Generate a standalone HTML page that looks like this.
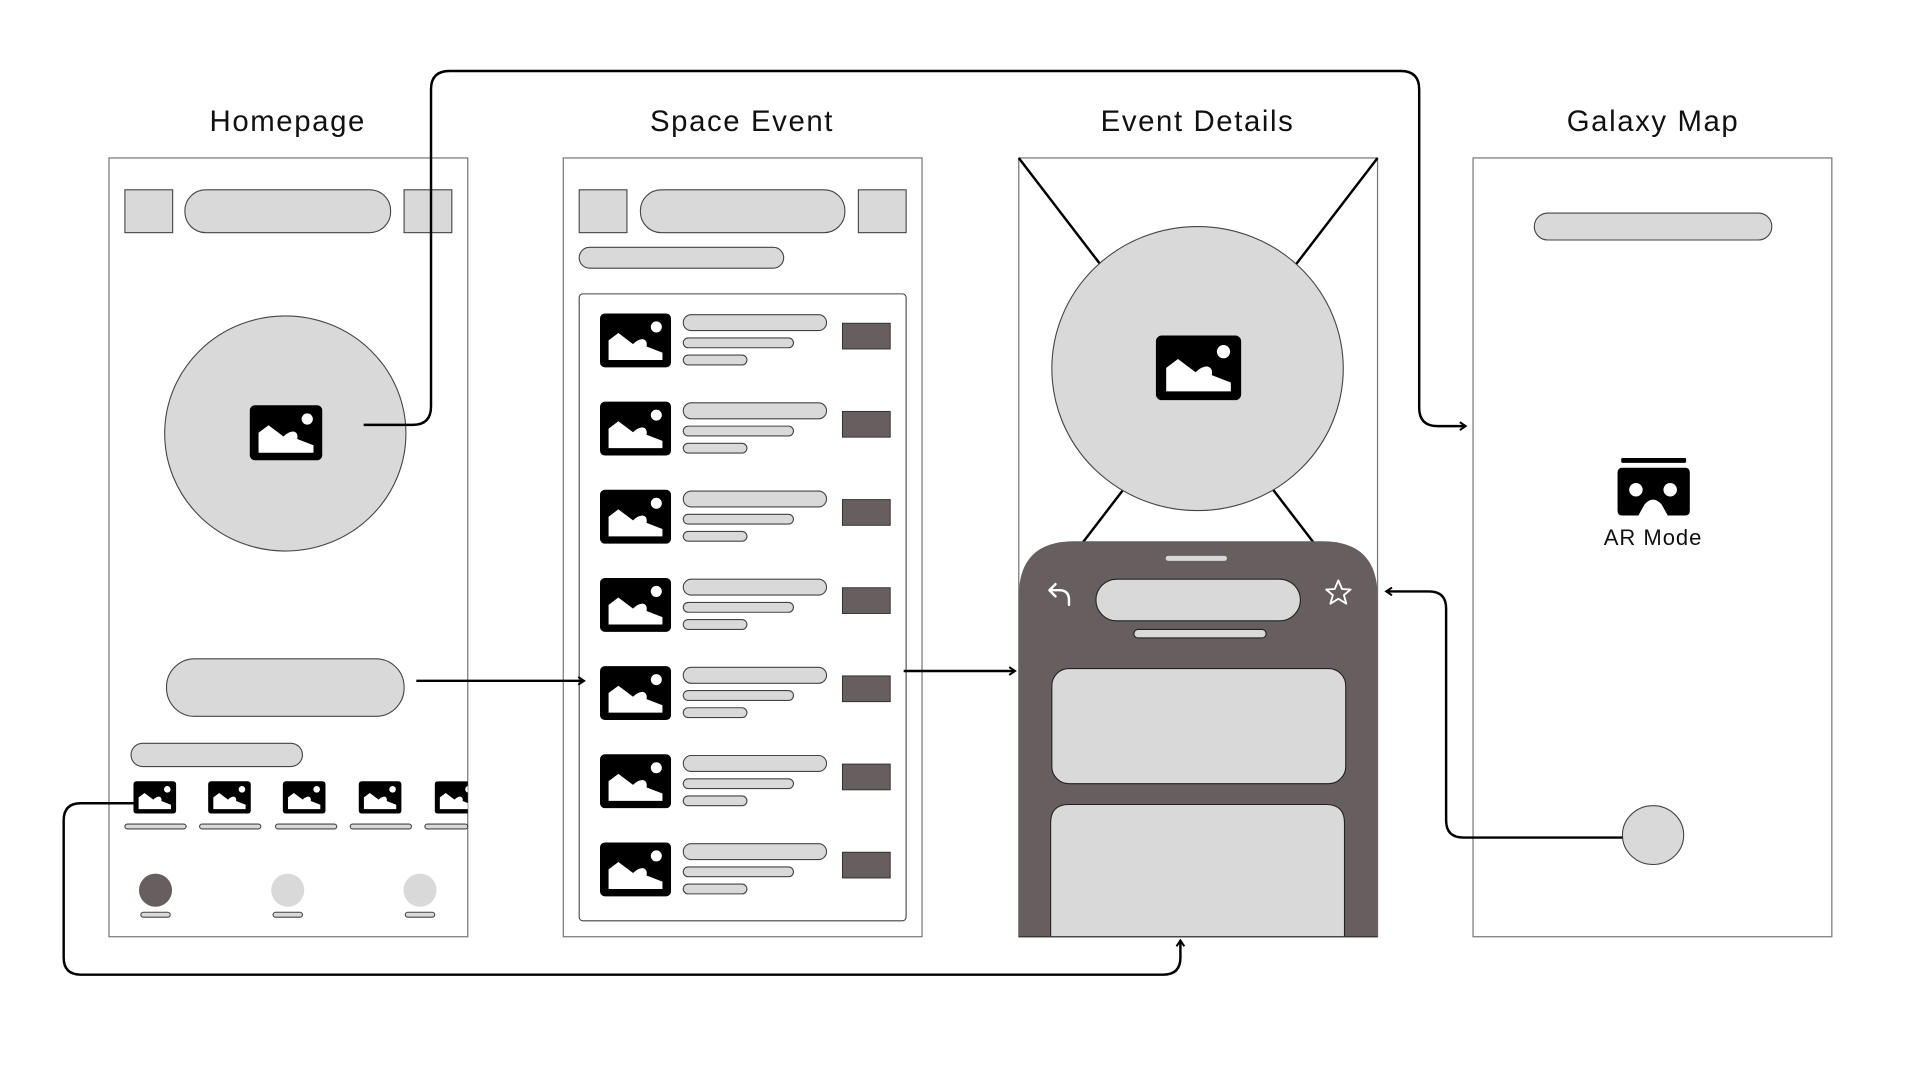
<!DOCTYPE html>
<html><head><meta charset="utf-8"><style>
html,body{margin:0;padding:0;background:#fff;width:1920px;height:1080px;overflow:hidden}
svg{display:block}
text{font-family:"Liberation Sans",sans-serif;fill:#111}
</style></head><body>
<svg width="1920" height="1080" viewBox="0 0 1568 882" xmlns="http://www.w3.org/2000/svg">
<defs>
<g id="img">
<rect x="0" y="0" width="58" height="44" rx="4" fill="#000"/>
<path d="M7 38 V22 L15 16 L27 25 Q31 21 35 21 Q39 22 38 27 L51 32 V38 Z" fill="#fff"/>
<circle cx="46" cy="11" r="4.5" fill="#fff"/>
</g>
<marker id="ar" viewBox="0 0 10 10" refX="8" refY="5" markerWidth="8" markerHeight="8" orient="auto-start-reverse" markerUnits="userSpaceOnUse">
<path d="M2 1 L8 5 L2 9" fill="none" stroke="#000" stroke-width="2"/>
</marker>
</defs>
<g font-size="24" text-anchor="middle" letter-spacing="1.3">
<text x="235" y="107">Homepage</text>
<text x="606" y="107">Space Event</text>
<text x="978" y="107">Event Details</text>
<text x="1350" y="107">Galaxy Map</text>
</g>
<g fill="#fff" stroke="#777" stroke-width="1">
<rect x="89" y="129" width="293" height="636"/>
<rect x="460" y="129" width="293" height="636"/>
<rect x="832" y="129" width="293" height="636"/>
<rect x="1203" y="129" width="293" height="636"/>
</g>
<g fill="#d9d9d9" stroke="#444" stroke-width="0.9">
<rect x="102" y="155" width="39" height="35"/>
<rect x="151" y="155" width="168" height="35" rx="17"/>
<rect x="330" y="155" width="39" height="35"/>
<ellipse cx="233" cy="354" rx="98.5" ry="96"/>
<rect x="136" y="538" width="194" height="47" rx="23"/>
<rect x="107" y="607" width="140" height="19" rx="9.5"/>
<rect x="102" y="673" width="50" height="4" rx="2"/>
<rect x="163" y="673" width="50" height="4" rx="2"/>
<rect x="225" y="673" width="50" height="4" rx="2"/>
<rect x="286" y="673" width="50" height="4" rx="2"/>
<rect x="347" y="673" width="35" height="4" rx="2"/>
<rect x="115" y="745" width="24" height="4" rx="2"/>
<rect x="223" y="745" width="24" height="4" rx="2"/>
<rect x="331" y="745" width="24" height="4" rx="2"/>
<rect x="473" y="155" width="39" height="35"/>
<rect x="523" y="155" width="167" height="35" rx="17"/>
<rect x="701" y="155" width="39" height="35"/>
<rect x="473" y="202" width="167" height="17" rx="8.5"/>
</g>
<circle cx="127" cy="727" r="13.5" fill="#675e5f"/>
<circle cx="235" cy="727" r="13.5" fill="#d9d9d9"/>
<circle cx="343" cy="727" r="13.5" fill="#d9d9d9"/>
<use href="#img" transform="translate(204,331) scale(1.02)"/>
<g>
<use href="#img" transform="translate(109,638) scale(0.6)"/>
<use href="#img" transform="translate(170,638) scale(0.6)"/>
<use href="#img" transform="translate(231,638) scale(0.6)"/>
<use href="#img" transform="translate(293,638) scale(0.6)"/>
<svg x="355" y="638" width="27" height="27" overflow="hidden"><use href="#img" transform="scale(0.6)"/></svg>
</g>
<rect x="473" y="240" width="267" height="512" rx="3" fill="#fff" stroke="#444" stroke-width="0.9"/>
<g id="row">
<use href="#img" transform="translate(490,256)"/>
<rect x="558" y="257" width="117" height="13" rx="6.5" fill="#d9d9d9" stroke="#444" stroke-width="0.9"/>
<rect x="558" y="276" width="90" height="8" rx="4" fill="#d9d9d9" stroke="#444" stroke-width="0.9"/>
<rect x="558" y="290" width="52" height="8" rx="4" fill="#d9d9d9" stroke="#444" stroke-width="0.9"/>
<rect x="688" y="264" width="39" height="21" fill="#675e5f" stroke="#333" stroke-width="0.8"/>
</g>
<use href="#row" y="72"/><use href="#row" y="144"/><use href="#row" y="216"/><use href="#row" y="288"/><use href="#row" y="360"/><use href="#row" y="432"/>
<line x1="832" y1="129" x2="1075" y2="446" stroke="#000" stroke-width="2"/>
<line x1="1125" y1="129" x2="882" y2="446" stroke="#000" stroke-width="2"/>
<ellipse cx="978" cy="301" rx="119" ry="116" fill="#d9d9d9" stroke="#444" stroke-width="0.9"/>
<use href="#img" transform="translate(944,274) scale(1.2)"/>
<path d="M832 765 V487 Q832 442 877 442 H1080 Q1125 442 1125 487 V765 Z" fill="#675e5f"/>
<rect x="952" y="454" width="50" height="4" rx="2" fill="#d9d9d9"/>
<path d="M873 494 V490 Q873 482 865 482 H858 M862 477 L857 482 L862 487" fill="none" stroke="#fff" stroke-width="2" stroke-linecap="round" stroke-linejoin="round"/>
<rect x="895" y="473" width="167" height="34" rx="17" fill="#d9d9d9" stroke="#222" stroke-width="0.9"/>
<path d="M1093 474 L1096 481 L1103 481.5 L1097.5 486 L1099.5 493 L1093 489 L1086.5 493 L1088.5 486 L1083 481.5 L1090 481 Z" fill="none" stroke="#fff" stroke-width="1.5" stroke-linejoin="round"/>
<rect x="926" y="514" width="108" height="7" rx="3.5" fill="#d9d9d9" stroke="#222" stroke-width="0.9"/>
<rect x="859" y="546" width="240" height="94" rx="14" fill="#d9d9d9" stroke="#222" stroke-width="0.9"/>
<path d="M858 765 V672 Q858 657 873 657 H1083 Q1098 657 1098 672 V765" fill="#d9d9d9" stroke="#222" stroke-width="0.9"/>
<line x1="832" y1="765" x2="1125" y2="765" stroke="#333" stroke-width="1"/>
<rect x="1253" y="174" width="194" height="22" rx="11" fill="#d9d9d9" stroke="#444" stroke-width="0.9"/>
<rect x="1324" y="374" width="53" height="4" rx="1" fill="#000"/>
<path d="M1325 382 H1376 Q1380 382 1380 386 V417 Q1380 421 1376 421 H1362 L1357 412 Q1350 404 1343 412 L1338 421 H1325 Q1321 421 1321 417 V386 Q1321 382 1325 382 Z" fill="#000"/>
<circle cx="1336" cy="400" r="5.5" fill="#fff"/>
<circle cx="1364" cy="400" r="5.5" fill="#fff"/>
<text x="1350" y="445" font-size="18" text-anchor="middle" letter-spacing="0.8">AR Mode</text>
<ellipse cx="1350" cy="682" rx="25" ry="24" fill="#d9d9d9" stroke="#444" stroke-width="0.9"/>
<g fill="none" stroke="#000" stroke-width="2">
<path d="M297 347 H337 Q352 347 352 332 V73 Q352 58 367 58 H1144 Q1159 58 1159 73 V333 Q1159 348 1174 348 H1197" marker-end="url(#ar)"/>
<path d="M340 556 H477" marker-end="url(#ar)"/>
<path d="M738 548 H829" marker-end="url(#ar)"/>
<path d="M109 656 H66 Q52 656 52 670 V782 Q52 796 66 796 H950 Q964 796 964 782 V768" marker-end="url(#ar)"/>
<path d="M1325 684 H1195 Q1181 684 1181 670 V497 Q1181 483 1167 483 H1132" marker-end="url(#ar)"/>
</g>
</svg>
</body></html>
